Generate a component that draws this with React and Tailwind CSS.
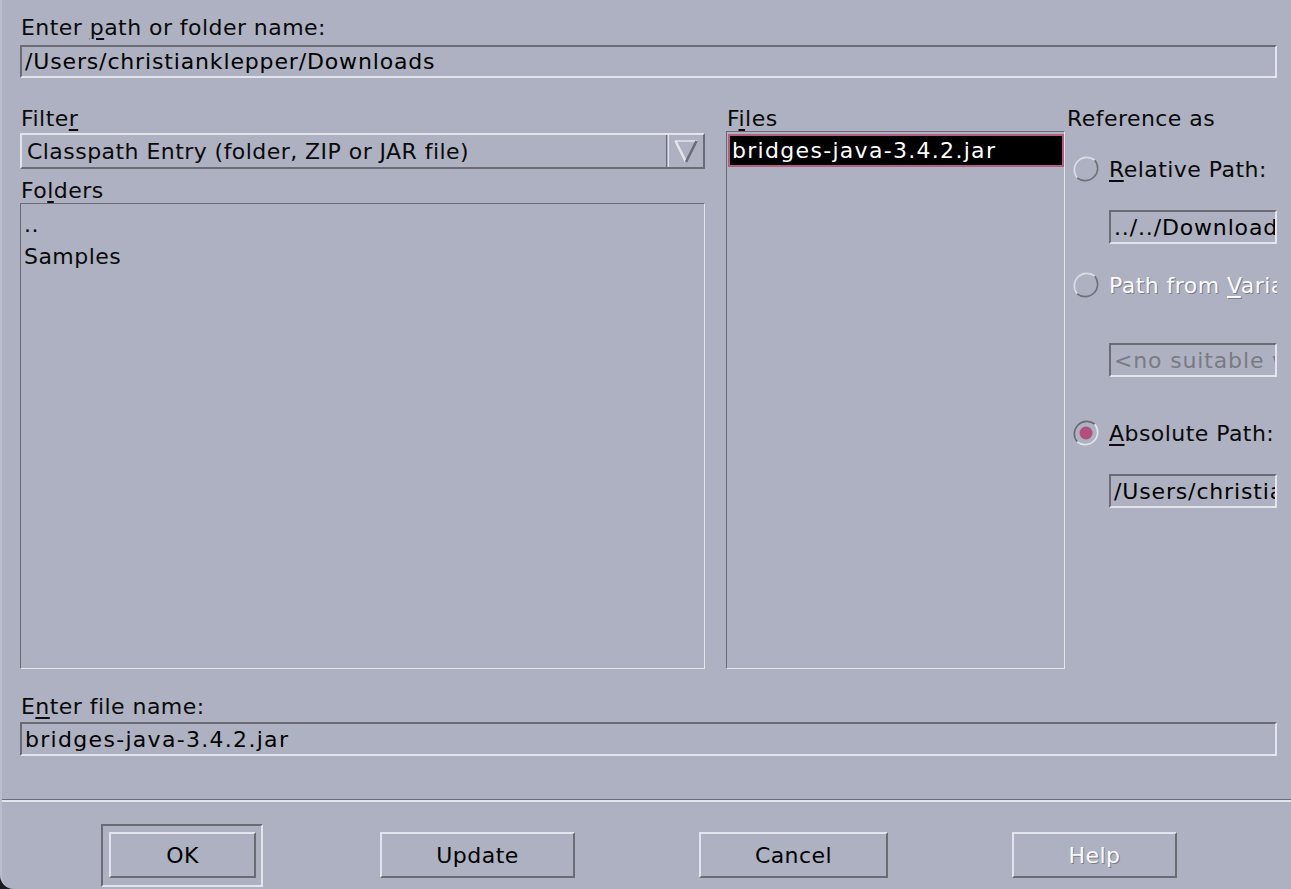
import React from 'react';

const sans = "font-['DejaVu_Sans',sans-serif] tracking-[0.45px]";

const sunken = 'border-t-2 border-l-2 border-b-2 border-r-2 border-t-[#6b6b76] border-l-[#6b6b76] border-b-[#e4e4ec] border-r-[#e4e4ec]';
const raised = 'border-t-2 border-l-2 border-b-2 border-r-2 border-t-[#e4e4ec] border-l-[#e4e4ec] border-b-[#6b6b76] border-r-[#6b6b76]';
const disabledText = 'text-[#fafafc] [text-shadow:1px_1px_0_#7c7c87]';

const U = ({ children }) => <span className="underline underline-offset-[3px] decoration-[1.5px]">{children}</span>;

const Field = ({ children, className = '', muted, wide }) => (
  <div className={`${sunken} flex items-center pl-[3px] whitespace-nowrap overflow-hidden text-[22px] ${wide ? 'tracking-[1.3px]' : 'tracking-[0.85px]'} ${muted ? 'text-[#7a7a84]' : 'text-black'} ${className}`}>
    {children}
  </div>
);

const Radio = ({ checked }) => (
  <svg width="28" height="28" viewBox="0 0 28 28" className="shrink-0">
    <path d="M5.2 22.8 A12.5 12.5 0 0 1 22.8 5.2" fill="none" stroke={checked ? '#6b6b76' : '#dcdce4'} strokeWidth="1.6" />
    <path d="M22.8 5.2 A12.5 12.5 0 0 1 5.2 22.8" fill="none" stroke={checked ? '#e4e4ec' : '#70707a'} strokeWidth="1.6" />
    {checked && <circle cx="14" cy="14" r="6.5" fill="#b24f7c" />}
  </svg>
);

const Button = ({ children, disabled, className = '' }) => (
  <div className={`${raised} h-[46px] flex items-center justify-center text-[22px] ${disabled ? disabledText : 'text-black'} ${className}`}>
    {children}
  </div>
);

export default function App() {
  return (
    <div className="w-[1291px] h-[889px] bg-[#1c1c20]">
      <div className={`h-full bg-[#aeb1c1] rounded-bl-[14px] border-l-2 border-[#babdcc] flex flex-col ${sans} text-[22px] text-[#0a0a0a]`}>
        <div className="flex flex-col pl-[18px] pr-[14px]">
          <div className="mt-[16px] h-[24px] leading-[24px] pl-[1px]">
            Enter <U>p</U>ath or folder name:
          </div>
          <Field className="mt-[5px] h-[33px]">/Users/christianklepper/Downloads</Field>

          <div className="mt-[29px] flex">
            {/* left column */}
            <div className="w-[685px] flex flex-col">
              <div className="h-[24px] leading-[24px] pl-[1px]">Filte<U>r</U></div>
              <div className={`${raised} mt-[2px] h-[36px] flex`}>
                <div className="flex-1 flex items-center pl-[5px] text-[22px] whitespace-nowrap">Classpath Entry (folder, ZIP or JAR file)</div>
                <div className="w-[1px] bg-[#6b6b76]" />
                <div className="w-[1px] bg-[#aeb1c1]" />
                <div className="w-[1px] bg-[#e4e4ec]" />
                <div className="w-[34px] flex items-center justify-center">
                  <svg width="24" height="24" viewBox="0 0 24 24">
                    <path d="M1 2 L23 2" stroke="#e4e4ec" strokeWidth="1.5" />
                    <path d="M1.5 2 L12 23" stroke="#e4e4ec" strokeWidth="2.5" />
                    <path d="M22.5 2 L12 23" stroke="#6b6b76" strokeWidth="2.5" />
                  </svg>
                </div>
              </div>
              <div className="mt-[10px] h-[24px] leading-[24px] pl-[1px]">Fo<U>l</U>ders</div>
              <div className="h-[466px] border border-t-[#6b6b76] border-l-[#6b6b76] border-b-[#e4e4ec] border-r-[#e4e4ec] pt-[5px] pl-[3px]">
                <div className="h-[32px] leading-[32px]">..</div>
                <div className="h-[32px] leading-[32px]">Samples</div>
              </div>
            </div>

            {/* middle column */}
            <div className="ml-[21px] w-[339px] flex flex-col">
              <div className="h-[24px] leading-[24px] pl-[1px]">F<U>i</U>les</div>
              <div className="h-[538px] border border-t-[#6b6b76] border-l-[#6b6b76] border-b-[#e4e4ec] border-r-[#e4e4ec] pt-[2px] pl-[1px]">
                <div className="h-[33px] bg-black border-2 border-[#b35f80] flex items-center pl-[2px] text-[22px] tracking-[1.3px] text-white whitespace-nowrap">
                  bridges-java-3.4.2.jar
                </div>
              </div>
            </div>

            {/* right column */}
            <div className="ml-[2px] flex-1 min-w-0 overflow-hidden flex flex-col">
              <div className="h-[24px] leading-[24px]">Reference as</div>
              <div className="mt-[23px] h-[30px] flex items-center pl-[5px] whitespace-nowrap">
                <Radio />
                <span className="ml-[9px]"><U>R</U>elative Path:</span>
              </div>
              <Field className="ml-[42px] mt-[26px] h-[34px] border-r-0">../../Downloads</Field>
              <div className="mt-[26px] h-[30px] flex items-center pl-[5px] whitespace-nowrap">
                <Radio />
                <span className={`ml-[9px] ${disabledText}`}>Path from <U>V</U>ariable:</span>
              </div>
              <Field muted className="ml-[42px] mt-[43px] h-[34px] border-r-0">&lt;no suitable variables&gt;</Field>
              <div className="mt-[41px] h-[30px] flex items-center pl-[5px] whitespace-nowrap">
                <Radio checked />
                <span className="ml-[9px]"><U>A</U>bsolute Path:</span>
              </div>
              <Field className="ml-[42px] mt-[26px] h-[34px] border-r-0">/Users/christianklepper/Downloads/bridges-java-3.4.2.jar</Field>
            </div>
          </div>

          <div className="mt-[26px] h-[24px] leading-[24px] pl-[1px]">
            E<U>n</U>ter file name:
          </div>
          <Field wide className="mt-[3px] h-[34px]">bridges-java-3.4.2.jar</Field>
        </div>

        <div className="mt-[43px] h-[1px] bg-[#6b6b76]" />
        <div className="h-[2px] bg-[#e4e4ec]" />

        <div className="mt-[22px] flex items-start">
          <div className={`ml-[99px] w-[162px] h-[63px] ${sunken} pt-[6px] pl-[6px]`}>
            <Button className="w-[147px]">OK</Button>
          </div>
          <Button className="ml-[117px] mt-[8px] w-[195px]">Update</Button>
          <Button className="ml-[124px] mt-[8px] w-[189px]">Cancel</Button>
          <Button disabled className="ml-[124px] mt-[8px] w-[165px]">Help</Button>
        </div>
      </div>
    </div>
  );
}
